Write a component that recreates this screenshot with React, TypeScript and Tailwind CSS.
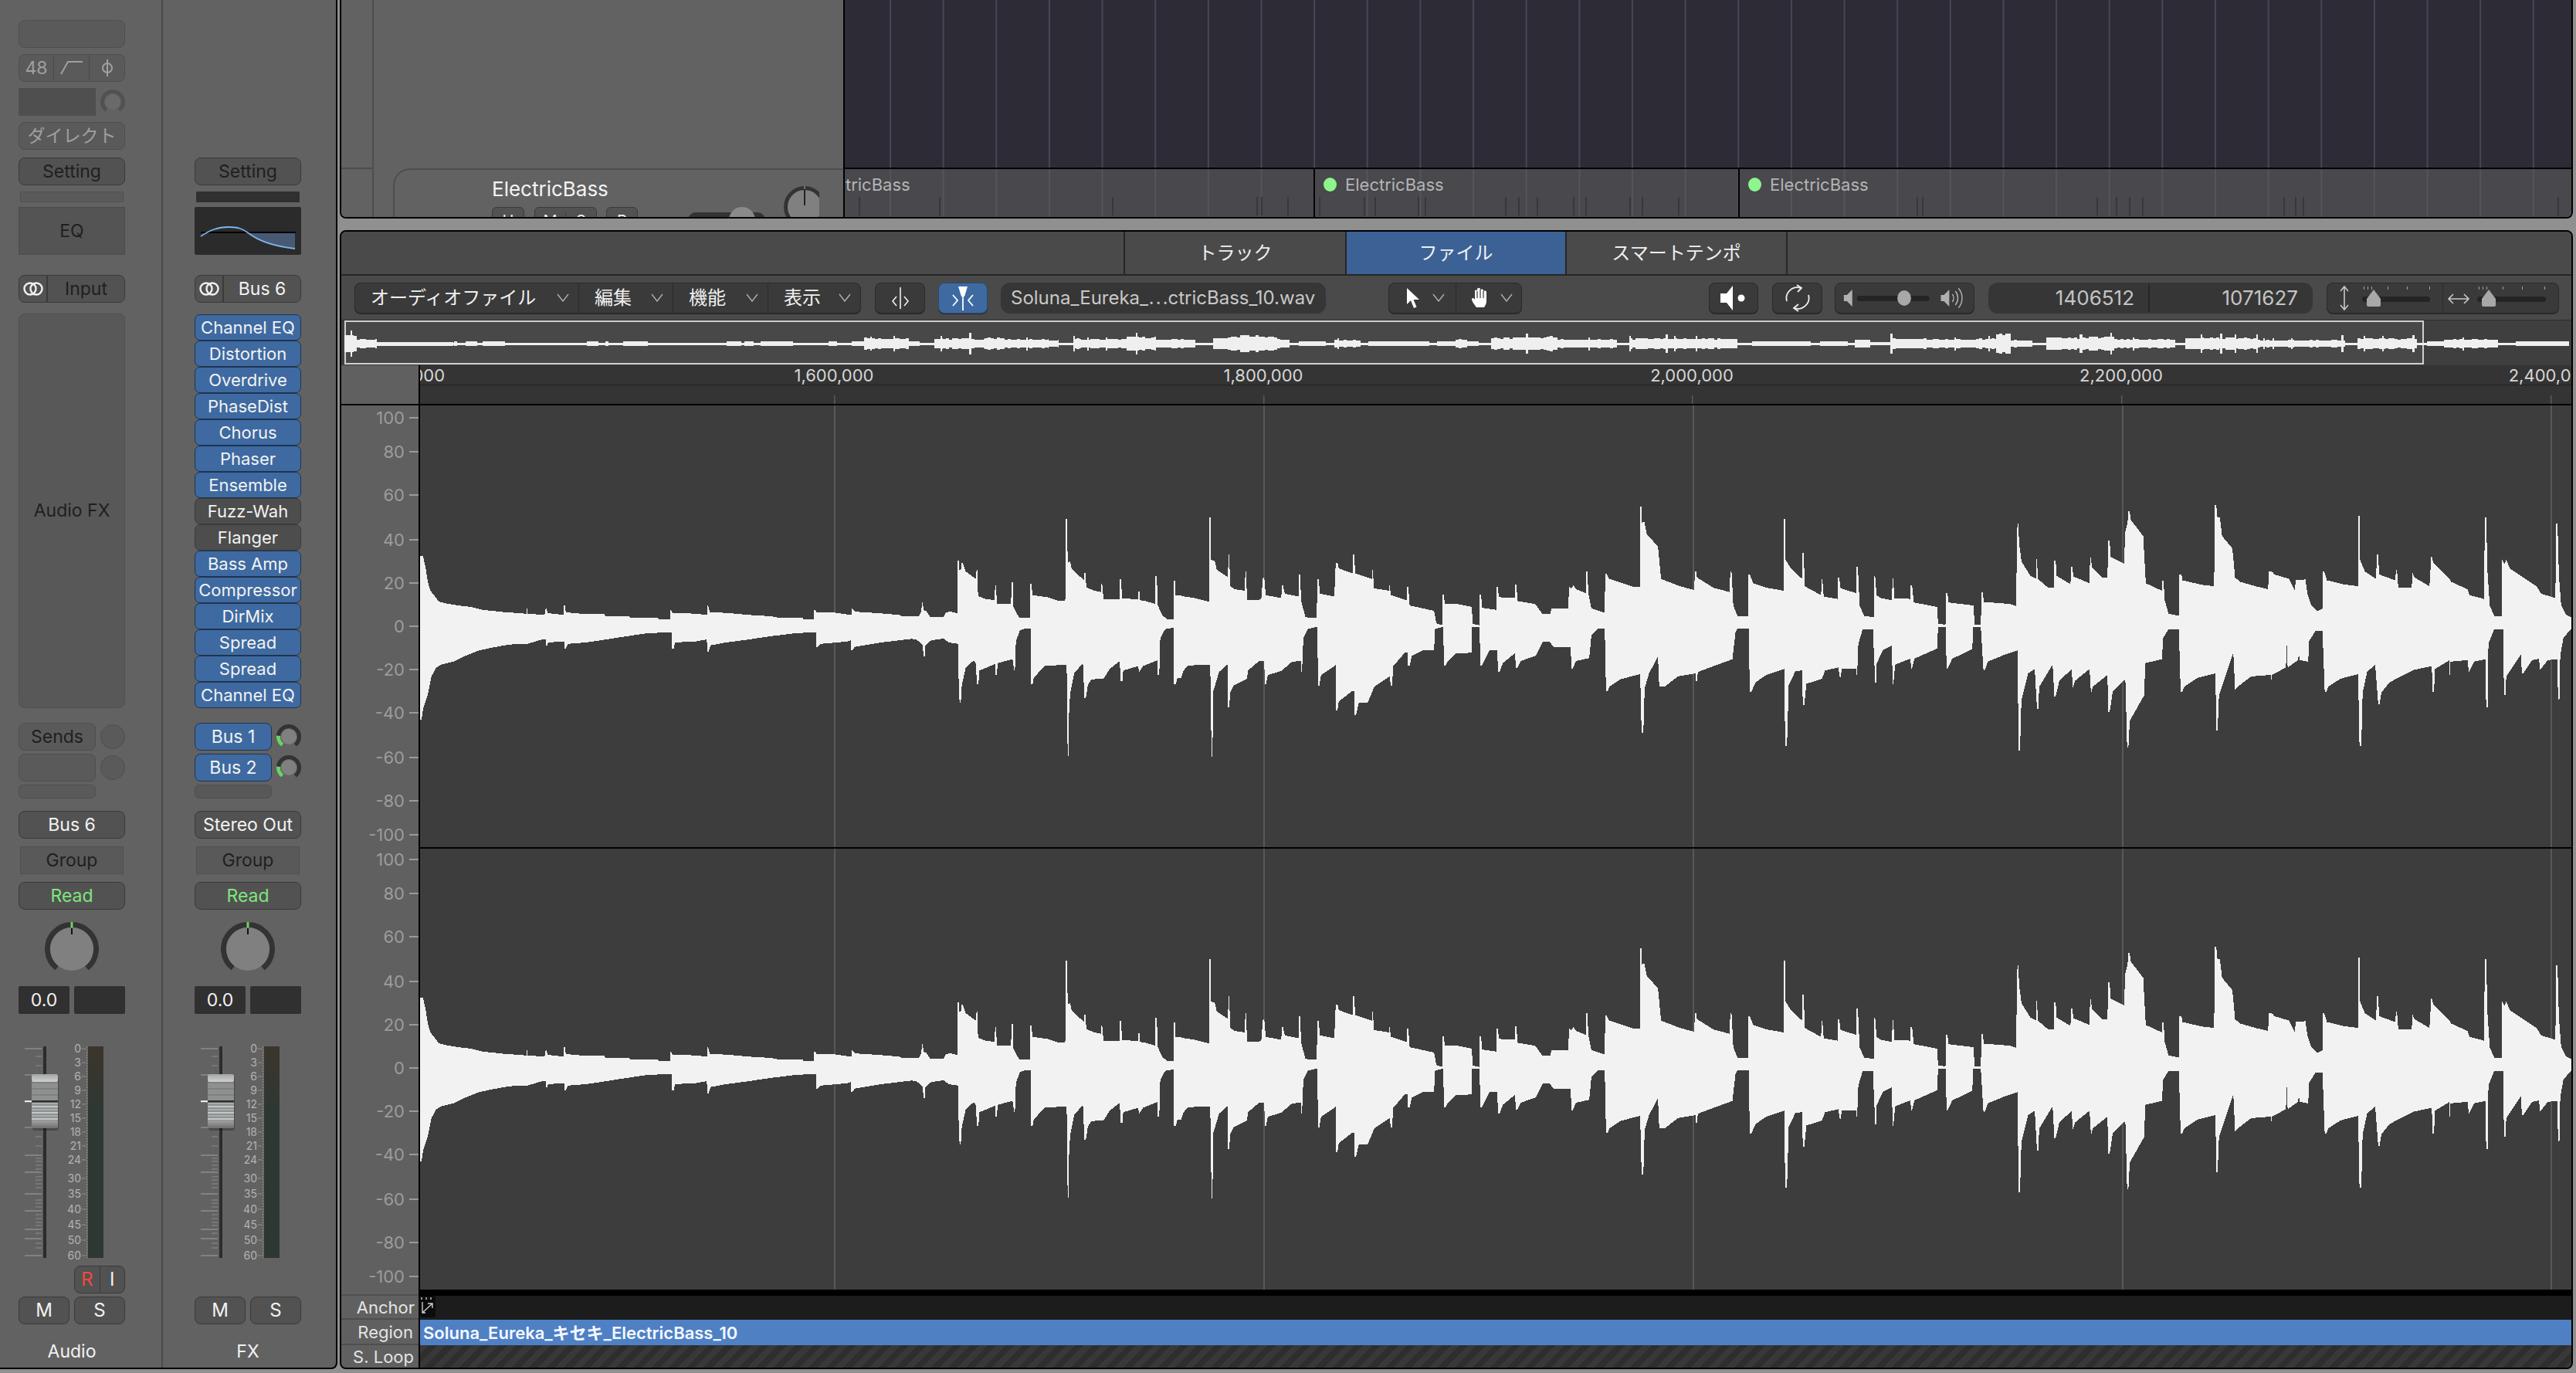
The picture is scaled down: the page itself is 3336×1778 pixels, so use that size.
import React from "react";

const btn = "h-[36px] flex items-center justify-center rounded-[8px] border text-[23px] leading-none";
const dark = "bg-[#525252] border-[#3a3a3a]";
const dim = "bg-[#5a5a5a] border-[#4f4f4f]";
const blue = "bg-[#3e6aa1] border-[#1e3450] text-[#f2f2f2]";
const tool = "h-[40px] flex items-center bg-[#3a3a3a] border border-[#2b2b2b] rounded-[8px] shadow-[0_1px_0_#2a2a2a]";

function pol(cx: number, cy: number, r: number, deg: number): string {
  const a = ((deg - 90) * Math.PI) / 180;
  return `${(cx + r * Math.cos(a)).toFixed(2)} ${(cy + r * Math.sin(a)).toFixed(2)}`;
}
function arc(cx: number, cy: number, r: number, from: number, to: number): string {
  const large = to - from > 180 ? 1 : 0;
  return `M${pol(cx, cy, r, from)}A${r} ${r} 0 ${large} 1 ${pol(cx, cy, r, to)}`;
}

function PanKnob() {
  return (
    <svg width="70" height="70" viewBox="0 0 70 70" className="block">
      <path d={arc(35, 35, 31.5, -142, 142)} fill="none" stroke="#333333" strokeWidth="7" />
      <circle cx="35" cy="35" r="28" fill="#808080" />
      <rect x="33.5" y="0" width="3" height="7" fill="#6cd46c" />
      <rect x="34" y="8" width="2" height="8" fill="#111111" />
    </svg>
  );
}

function SendKnob({ active }: { active: boolean }) {
  return (
    <svg width="32" height="36" viewBox="0 0 32 36" className="block">
      {active ? (
        <>
          <path d={arc(16, 18, 13.5, -142, 142)} fill="none" stroke="#333333" strokeWidth="5" />
          <path d={arc(16, 18, 13.5, -142, -85)} fill="none" stroke="#68d468" strokeWidth="5" />
          <circle cx="16" cy="18" r="10" fill="#808080" />
        </>
      ) : (
        <circle cx="16" cy="18" r="15.5" fill="#5a5a5a" stroke="#4f4f4f" />
      )}
    </svg>
  );
}

function Stereo() {
  return (
    <svg width="26" height="20" viewBox="0 0 26 20" fill="none" stroke="#f0f0f0" strokeWidth="2.4">
      <circle cx="9" cy="10" r="7.5" />
      <circle cx="17" cy="10" r="7.5" />
    </svg>
  );
}

const scaleLabels: [string, number][] = [
  ["0", 1357], ["3", 1375], ["6", 1393], ["9", 1411], ["12", 1429], ["15", 1447], ["18", 1465], ["21", 1483],
  ["24", 1501], ["30", 1525], ["35", 1545], ["40", 1565], ["45", 1585], ["50", 1605], ["60", 1625],
];
const longTicks = [1357, 1391, 1459, 1495, 1517, 1545, 1567, 1591, 1603, 1625];
const shortTicks = [1367, 1379, 1471, 1483, 1499, 1503, 1508, 1513, 1523, 1527, 1532, 1537, 1553, 1557, 1562, 1572, 1577, 1582, 1586, 1596, 1609, 1615];

function Fader() {
  return (
    <svg width="138" height="280" viewBox="24 1354 138 280" className="block overflow-visible">
      <defs>
        <linearGradient id="mtr" x1="0" y1="0" x2="0" y2="1">
          <stop offset="0" stopColor="#3b352c" />
          <stop offset="0.3" stopColor="#2f3733" />
          <stop offset="1" stopColor="#2f3733" />
        </linearGradient>
        <linearGradient id="capTop" x1="0" y1="0" x2="0" y2="1">
          <stop offset="0" stopColor="#a4a6a6" />
          <stop offset="1" stopColor="#cfd1d1" />
        </linearGradient>
        <linearGradient id="capBot" x1="0" y1="0" x2="0" y2="1">
          <stop offset="0" stopColor="#a0a2a2" />
          <stop offset="1" stopColor="#6e6e6e" />
        </linearGradient>
      </defs>
      {longTicks.map((y) => <rect key={y} x="32" y={y - 0.75} width="22" height="1.5" fill="#8d8d8d" />)}
      {shortTicks.map((y) => <rect key={y} x="46" y={y - 0.75} width="8" height="1.5" fill="#7f7f7f" />)}
      <rect x="56" y="1354" width="4" height="274" fill="#2c2c2c" />
      <rect x="42" y="1393" width="34" height="70" rx="3" fill="#000000" opacity="0.25" />
      <rect x="41" y="1390" width="34" height="70" rx="3" fill="#8f9090" />
      <rect x="41" y="1390" width="34" height="10" rx="3" fill="url(#capTop)" />
      {[0, 1, 2, 3, 4, 5].map((i) => <rect key={i} x="41" y={1400 + i * 4} width="34" height="2" fill={i % 2 ? "#8d8f8f" : "#7f8181"} />)}
      <rect x="41" y="1424" width="34" height="2.5" fill="#2e2e2e" />
      {[0, 1, 2, 3, 4, 5].map((i) => <rect key={i} x="41" y={1427 + i * 4} width="34" height="2" fill={i % 2 ? "#c3c9cb" : "#a9adae"} />)}
      <rect x="41" y="1450" width="34" height="10" rx="2" fill="url(#capBot)" />
      <rect x="32" y="1424.2" width="9" height="2" fill="#f4f4f4" />
      {scaleLabels.map(([t, y]) => (
        <g key={t}>
          <text x="105" y={y + 5} textAnchor="end" fontSize="14" fill="#b2b2b2">{t}</text>
          <rect x="106" y={y - 0.5} width="5" height="1" fill="#8f8f8f" />
        </g>
      ))}
      <line x1="112.5" y1="1354" x2="112.5" y2="1628" stroke="#a0a0a0" strokeWidth="1" strokeDasharray="1.5 2" />
      <rect x="114" y="1354" width="20" height="274" fill="url(#mtr)" />
    </svg>
  );
}

function Strip1() {
  return (
    <div className="w-[211px] h-full pl-[24px] flex flex-col border-r-2 border-[#4a4a4a]">
      <div className="w-[138px] flex flex-col">
        <div className={`${btn} ${dim} mt-[26px]`} />
        <div className={`${btn} ${dim} mt-[8px] text-[#a0a0a0]`}>
          <span className="w-[45px] h-full flex items-center justify-center border-r border-[#4a4a4a]">48</span>
          <span className="w-[46px] h-full flex items-center justify-center border-r border-[#4a4a4a]">
            <svg width="30" height="18" viewBox="0 0 30 18" fill="none" stroke="#a0a0a0" strokeWidth="2"><path d="M1 17L10 1H29" /></svg>
          </span>
          <span className="flex-1 h-full flex items-center justify-center">
            <svg width="16" height="22" viewBox="0 0 16 22" fill="none" stroke="#a0a0a0" strokeWidth="2"><ellipse cx="8" cy="11" rx="6" ry="6" /><path d="M8 0V22" /></svg>
          </span>
        </div>
        <div className="mt-[8px] h-[36px] flex items-center justify-between">
          <div className="w-[100px] h-[36px] bg-[#4f4f4f]" />
          <svg width="32" height="36" viewBox="0 0 32 36">
            <path d={arc(16, 18, 13.5, -142, 142)} fill="none" stroke="#515151" strokeWidth="5" />
            <circle cx="16" cy="18" r="10" fill="#6a6a6a" />
          </svg>
        </div>
        <div className={`${btn} ${dim} mt-[8px] text-[#a0a0a0]`}>ダイレクト</div>
        <div className={`${btn} ${dark} mt-[10px] text-[#1f1f1f]`}>Setting</div>
        <div className="mt-[8px] mx-[2px] h-[14px] bg-[#5a5a5a] border border-[#505050]" />
        <div className="mt-[6px] h-[62px] flex items-center justify-center bg-[#545454] border border-[#4c4c4c] text-[23px] text-[#1f1f1f]">EQ</div>
        <div className={`${btn} ${dark} mt-[26px] text-[#1f1f1f]`}>
          <span className="w-[37px] h-full flex items-center justify-center border-r-2 border-[#3a3a3a]"><Stereo /></span>
          <span className="flex-1 text-center">Input</span>
        </div>
        <div className="mt-[14px] h-[511px] flex items-center justify-center bg-[#585858] border border-[#505050] rounded-[8px] text-[23px] text-[#1f1f1f]">Audio FX</div>
        <div className="mt-[19px] flex items-center justify-between">
          <div className={`${btn} ${dim} w-[100px] text-[#1f1f1f]`}>Sends</div>
          <SendKnob active={false} />
        </div>
        <div className="mt-[4px] flex items-center justify-between">
          <div className={`${btn} ${dim} w-[100px]`} />
          <SendKnob active={false} />
        </div>
        <div className={`mt-[4px] h-[18px] w-[100px] rounded-[6px] border ${dim}`} />
        <div className={`${btn} ${dark} mt-[16px] text-[#f2f2f2]`}>Bus 6</div>
        <div className="mt-[10px] mx-[2px] h-[36px] flex items-center justify-center bg-[#595959] border border-[#505050] text-[23px] text-[#1f1f1f]">Group</div>
        <div className={`${btn} ${dark} mt-[10px] text-[#7de77d]`}>Read</div>
        <div className="mt-[16px] flex justify-center"><PanKnob /></div>
        <div className="mt-[13px] flex justify-between">
          <div className="w-[66px] h-[36px] flex items-center justify-center bg-[#303030] rounded-[2px] text-[23px] text-[#f2f2f2]">0.0</div>
          <div className="w-[66px] h-[36px] bg-[#303030] rounded-[2px]" />
        </div>
        <div className="mt-[42px]"><Fader /></div>
        <div className="mt-[4px] h-[35px] flex justify-end">
          <div className={`${btn} ${dark} w-[66px] h-[35px] text-[24px]`}>
            <span className="flex-1 h-full flex items-center justify-center text-[#f04a3a] border-r border-[#3a3a3a]">R</span>
            <span className="flex-1 h-full flex items-center justify-center text-[#f2f2f2]">I</span>
          </div>
        </div>
        <div className="mt-[5px] flex justify-between">
          <div className={`${btn} ${dark} w-[66px] text-[24px] text-[#f2f2f2]`}>M</div>
          <div className={`${btn} ${dark} w-[66px] text-[24px] text-[#f2f2f2]`}>S</div>
        </div>
        <div className="mt-[22px] text-center text-[23px] leading-[26px] text-[#f2f2f2]">Audio</div>
      </div>
    </div>
  );
}

const fx: [string, boolean][] = [
  ["Channel EQ", true], ["Distortion", true], ["Overdrive", true], ["PhaseDist", true], ["Chorus", true],
  ["Phaser", true], ["Ensemble", true], ["Fuzz-Wah", false], ["Flanger", false], ["Bass Amp", true],
  ["Compressor", true], ["DirMix", true], ["Spread", true], ["Spread", true], ["Channel EQ", true],
];

function Strip2() {
  return (
    <div className="flex-1 h-full pl-[41px] flex flex-col">
      <div className="w-[138px] flex flex-col">
        <div className={`${btn} ${dark} mt-[204px] text-[#1f1f1f]`}>Setting</div>
        <div className="mt-[8px] mx-[2px] h-[14px] bg-[#303030] rounded-[1px]" />
        <svg width="138" height="62" viewBox="0 0 138 62" className="block mt-[6px] rounded-[2px]">
          <rect width="138" height="62" fill="#2b2b2b" />
          <path d="M66 32C84 44 100 52 130 54V33Z" fill="#485a73" />
          <rect x="8" y="32" width="123" height="2" fill="#000000" />
          <path d="M8 38C20 30 30 26 44 26C56 26 62 28 70 34C84 45 104 51 130 54" fill="none" stroke="#7eb2ee" strokeWidth="1.8" />
        </svg>
        <div className={`${btn} ${dark} mt-[26px] text-[#f2f2f2]`}>
          <span className="w-[37px] h-full flex items-center justify-center border-r-2 border-[#3a3a3a]"><Stereo /></span>
          <span className="flex-1 text-center">Bus 6</span>
        </div>
        <div className="mt-[15px] flex flex-col">
          {fx.map(([t, on], i) => (
            <div key={i} className={`h-[34px] flex items-center justify-center rounded-[7px] border text-[22px] leading-none whitespace-nowrap ${on ? blue : "bg-[#4d4d4d] border-[#3a3a3a] text-[#f2f2f2]"}`}>{t}</div>
          ))}
        </div>
        <div className="mt-[19px] flex items-center justify-between">
          <div className={`${btn} ${blue} w-[100px]`}>Bus 1</div>
          <SendKnob active />
        </div>
        <div className="mt-[4px] flex items-center justify-between">
          <div className={`${btn} ${blue} w-[100px]`}>Bus 2</div>
          <SendKnob active />
        </div>
        <div className={`mt-[4px] h-[18px] w-[100px] rounded-[6px] border bg-[#585858] border-[#4f4f4f]`} />
        <div className={`${btn} ${dark} mt-[16px] text-[#f2f2f2]`}>Stereo Out</div>
        <div className="mt-[10px] mx-[2px] h-[36px] flex items-center justify-center bg-[#595959] border border-[#505050] text-[23px] text-[#1f1f1f]">Group</div>
        <div className={`${btn} ${dark} mt-[10px] text-[#7de77d]`}>Read</div>
        <div className="mt-[16px] flex justify-center"><PanKnob /></div>
        <div className="mt-[13px] flex justify-between">
          <div className="w-[66px] h-[36px] flex items-center justify-center bg-[#303030] rounded-[2px] text-[23px] text-[#f2f2f2]">0.0</div>
          <div className="w-[66px] h-[36px] bg-[#303030] rounded-[2px]" />
        </div>
        <div className="mt-[42px]"><Fader /></div>
        <div className="mt-[4px] h-[35px]" />
        <div className="mt-[5px] flex justify-between">
          <div className={`${btn} ${dark} w-[66px] text-[24px] text-[#f2f2f2]`}>M</div>
          <div className={`${btn} ${dark} w-[66px] text-[24px] text-[#f2f2f2]`}>S</div>
        </div>
        <div className="mt-[22px] text-center text-[23px] leading-[26px] text-[#f2f2f2]">FX</div>
      </div>
    </div>
  );
}

function Peaks({ x0, w, xs }: { x0: number; w: number; xs: number[] }) {
  return (
    <svg width={w} height="24" viewBox={`${x0} 258 ${w} 24`} className="block" shapeRendering="crispEdges">
      {xs.map((x) => <rect key={x} x={x} y="258" width="2" height="24" fill="#38383a" />)}
    </svg>
  );
}

function Upper() {
  return (
    <div className="h-[283px] ml-[3px] mr-[4px] flex border-l-2 border-b-2 border-r-2 border-black rounded-bl-[8px] rounded-br-[8px] overflow-hidden">
      <div className="w-[650px] h-full flex bg-[#626262]">
        <div className="w-[42px] h-full border-r-2 border-[#4d4d4d]">
          <div className="h-[219px] border-b-2 border-[#4d4d4d]" />
        </div>
        <div className="flex-1 pl-[25px] pt-[218px] overflow-hidden">
          <div className="h-[120px] pl-[126px] pt-[10px] border-t-2 border-l-2 border-[#4d4d4d] rounded-tl-[22px] flex">
            <div className="w-[254px] flex flex-col">
              <div className="text-[26px] leading-[30px] text-[#f4f4f4]">ElectricBass</div>
              <div className="mt-[8px] flex text-[20px] text-[#f2f2f2] leading-none">
                <div className="w-[42px] h-[36px] border border-[#3a3a3a] bg-[#525252] rounded-[6px] flex items-center justify-center">U</div>
                <div className="ml-[13px] w-[81px] h-[36px] border border-[#3a3a3a] bg-[#525252] rounded-[6px] flex items-center">
                  <span className="flex-1 text-center border-r border-[#3a3a3a]">M</span>
                  <span className="flex-1 text-center">S</span>
                </div>
                <div className="ml-[12px] w-[41px] h-[36px] border border-[#3a3a3a] bg-[#525252] rounded-[6px] flex items-center justify-center">R</div>
              </div>
            </div>
            <svg width="170" height="64" viewBox="890 219 170 64" className="block -mt-[10px]">
              <rect x="890" y="274" width="100" height="20" rx="10" fill="#333333" />
              <circle cx="960" cy="284" r="17" fill="#8a8a8a" />
              <circle cx="1041" cy="267" r="24.5" fill="#808080" stroke="#333333" strokeWidth="5" />
              <rect x="1040.5" y="240" width="1" height="4" fill="#6cd46c" />
              <rect x="1040" y="244" width="2" height="21" fill="#222222" />
            </svg>
          </div>
        </div>
      </div>
      <div className="flex-1 h-full flex flex-col border-l-2 border-black min-w-0">
        <div className="h-[219px] bg-[#2d2b36] bg-[linear-gradient(90deg,#474652_0_2px,transparent_2px)] bg-size-[68.65px_100%] bg-position-[58px_0] border-b-2 border-black" />
        <div className="flex-1 flex bg-[#48484d] bg-[linear-gradient(90deg,#54545a_0_2px,transparent_2px)] bg-size-[68.65px_100%] bg-position-[58px_0]">
          <div className="w-[607px] flex flex-col overflow-hidden">
            <div className="h-[36px] pt-[4px] -ml-[43px] flex items-center text-[22px] leading-none text-[#b4b4b4] whitespace-nowrap">ElectricBass</div>
            <Peaks x0={1094} w={607} xs={[1112, 1216, 1440, 1627, 1633, 1667]} />
          </div>
          <div className="w-[550px] flex flex-col border-l-2 border-black overflow-hidden">
            <div className="h-[36px] pt-[4px] pl-[11px] flex items-center text-[22px] leading-none text-[#b4b4b4] whitespace-nowrap">
              <span className="w-[17px] h-[18px] rounded-[50%] bg-[#8cf58c] mr-[11px]" />ElectricBass
            </div>
            <Peaks x0={1703} w={548} xs={[1708, 1766, 1780, 1836, 1845, 1949, 1966, 1990, 2037, 2053, 2110, 2126, 2173]} />
          </div>
          <div className="flex-1 flex flex-col border-l-2 border-black overflow-hidden">
            <div className="h-[36px] pt-[4px] pl-[11px] flex items-center text-[22px] leading-none text-[#b4b4b4] whitespace-nowrap">
              <span className="w-[17px] h-[18px] rounded-[50%] bg-[#8cf58c] mr-[11px]" />ElectricBass
            </div>
            <Peaks x0={2253} w={1077} xs={[2489, 2482, 2715, 2740, 2757, 2774, 2957, 2972, 2982, 3312]} />
          </div>
        </div>
      </div>
    </div>
  );
}

function Chev() {
  return (
    <svg width="16" height="11" viewBox="0 0 16 11" fill="none" stroke="#b0b0b0" strokeWidth="1.4" className="shrink-0"><path d="M1 1L8 10L15 1" /></svg>
  );
}

function MenuSeg({ t, w, last }: { t: string; w: string; last?: boolean }) {
  return (
    <div className={`${w} h-full flex items-center justify-between pl-[20px] pr-[12px] text-[24px] leading-none text-[#f0f0f0] ${last ? "" : "border-r border-[#2b2b2b]"}`}>
      <span className="whitespace-nowrap">{t}</span>
      <Chev />
    </div>
  );
}

function Toolbar() {
  return (
    <div className="h-[58px] flex items-center pl-[17px] bg-[#4a4a4a] border-b border-[#2e2e2e]">
      <div className={`${tool} w-[656px]`}>
        <MenuSeg t="オーディオファイル" w="w-[290px]" />
        <MenuSeg t="編集" w="w-[122px]" />
        <MenuSeg t="機能" w="w-[123px]" />
        <MenuSeg t="表示" w="flex-1" last />
      </div>
      <div className={`${tool} w-[65px] ml-[18px] justify-center`}>
        <svg width="28" height="30" viewBox="0 0 28 30" fill="none" stroke="#f0f0f0" strokeWidth="1.6">
          <path d="M14 1V29M9 13L4 19L9 25M19 13L24 19L19 25" />
        </svg>
      </div>
      <div className={`${tool} w-[64px] ml-[17px] justify-center bg-[#3e6aa1] border-[#2c4a70]`}>
        <svg width="36" height="32" viewBox="0 0 36 32" fill="none" stroke="#ffffff" strokeWidth="1.8">
          <path d="M18 14V32M5 12L11 19L5 26M31 12L25 19L31 26" />
          <path d="M12 1H24L20 14H16Z" fill="#ffffff" stroke="none" />
        </svg>
      </div>
      <div className="w-[421px] ml-[17px] h-[40px] flex items-center pl-[13px] bg-[#363636] rounded-[12px] text-[24px] leading-none text-[#c8c8c8] whitespace-nowrap overflow-hidden">Soluna_Eureka_⋯ctricBass_10.wav</div>
      <div className={`${tool} w-[173px] ml-[81px]`}>
        <div className="w-[87px] h-full flex items-center pl-[22px] gap-[16px] border-r border-[#2b2b2b]">
          <svg width="18" height="26" viewBox="0 0 18 26" fill="#ffffff"><path d="M1 0V21L6 16L10 26L13.5 24.5L9.5 15H17Z" /></svg>
          <Chev />
        </div>
        <div className="flex-1 h-full flex items-center pl-[19px] gap-[14px]">
          <svg width="24" height="27" viewBox="0 0 24 27"><path d="M7 26C4 22 1 18 1 15C2 13 4 14 5 16V5C5 3 8 3 8 5V3C8 0 12 0 12 3V4C12 2 16 2 16 4V6C16 4 20 4 20 6V18C20 22 18 24 17 26Z" fill="#ffffff" /><path d="M8 5V14M12 3V14M16 5V14" stroke="#3a3a3a" strokeWidth="1.2" /></svg>
          <Chev />
        </div>
      </div>
      <div className={`${tool} w-[64px] ml-[242px] justify-center`}>
        <svg width="36" height="34" viewBox="0 0 36 34" fill="#ffffff"><path d="M1 11H9L17 1V33L9 23H1Z" /><circle cx="28" cy="17" r="4.5" /></svg>
      </div>
      <div className={`${tool} w-[65px] ml-[18px] justify-center`}>
        <svg width="34" height="36" viewBox="0 0 34 36" fill="none" stroke="#f0f0f0" strokeWidth="1.8">
          <path d="M3 22A14 14 0 0 1 21 5M31 14A14 14 0 0 1 13 31" />
          <path d="M16 1L22 5L17 10M18 26L12 31L18 35" />
        </svg>
      </div>
      <div className={`${tool} w-[181px] ml-[16px]`}>
        <svg width="181" height="38" viewBox="0 0 181 38" className="block">
          <path d="M11 15H15L22 8V30L15 23H11Z" fill="#b0b0b0" />
          <rect x="28" y="16" width="95" height="7" rx="3.5" fill="#242424" />
          <ellipse cx="90" cy="19" rx="9" ry="10" fill="#a8a8a8" />
          <path d="M138 15H142L149 8V30L142 23H138Z" fill="#b0b0b0" />
          <path d="M153 14A8 8 0 0 1 153 24M157 10A14 14 0 0 1 157 28M161 6A20 20 0 0 1 161 32" fill="none" stroke="#b0b0b0" strokeWidth="1.5" />
        </svg>
      </div>
      <div className="w-[420px] ml-[18px] h-[40px] flex items-center bg-[#363636] rounded-[12px] text-[26px] leading-none text-[#c4c4c4] text-right">
        <div className="w-[209px] pr-[18px] h-[36px] flex items-center justify-end border-r-2 border-[#262626]">1406512</div>
        <div className="flex-1 pr-[19px]">1071627</div>
      </div>
      <div className={`${tool} w-[301px] ml-[18px]`}>
        <div className="w-[150px] h-full border-r border-[#2b2b2b]">
          <svg width="150" height="38" viewBox="3013 368 150 38" className="block">
            <path d="M3035 372V402M3030 378L3035 372L3040 378M3030 396L3035 402L3040 396" fill="none" stroke="#c8c8c8" strokeWidth="1.6" />
            {[3060, 3065, 3070, 3091, 3116, 3145].map((x) => <rect key={x} x={x} y="372" width="1" height="4" fill="#a0a0a0" />)}
            <rect x="3058" y="385" width="88" height="7" rx="3.5" fill="#242424" />
            <path d="M3073 376L3082 388V396C3082 398 3080 398 3079 398H3067C3066 398 3064 398 3064 396V388Z" fill="#a8a8a8" />
          </svg>
        </div>
        <div className="flex-1 h-full">
          <svg width="150" height="38" viewBox="3164 368 150 38" className="block">
            <path d="M3171 388H3197M3177 382L3171 388L3177 394M3191 382L3197 388L3191 394" fill="none" stroke="#c8c8c8" strokeWidth="1.6" />
            {[3210, 3215, 3220, 3241, 3266, 3295].map((x) => <rect key={x} x={x} y="372" width="1" height="4" fill="#a0a0a0" />)}
            <rect x="3208" y="385" width="89" height="7" rx="3.5" fill="#242424" />
            <path d="M3223 376L3232 388V396C3232 398 3230 398 3229 398H3217C3216 398 3214 398 3214 396V388Z" fill="#a8a8a8" />
          </svg>
        </div>
      </div>
    </div>
  );
}

const ov: [number, number, number][] = [
  [446, 462, 10], [462, 488, 5], [488, 587, 2.5], [588, 592, 3], [603, 618, 3], [625, 654, 3], [760, 775, 3], [784, 788, 3],
  [807, 839, 3], [941, 960, 3], [964, 976, 3], [985, 1027, 3], [1073, 1084, 3], [1103, 1119, 3], [1119, 1129, 8],
  [1129, 1177, 6], [1177, 1191, 3], [1210, 1221, 6], [1221, 1256, 6], [1255, 1258, 14], [1258, 1275, 5], [1275, 1301, 7],
  [1301, 1358, 5], [1358, 1371, 4], [1390, 1400, 6], [1400, 1459, 5], [1459, 1497, 8], [1497, 1548, 5], [1571, 1590, 6],
  [1590, 1654, 9], [1654, 1670, 5], [1682, 1717, 3], [1728, 1762, 4], [1772, 1816, 3], [1816, 1851, 3], [1861, 1885, 3],
  [1885, 1900, 5], [1900, 1915, 3], [1931, 1976, 7], [1976, 1979, 13], [1979, 2017, 8], [2017, 2094, 5], [2110, 2157, 6],
  [2157, 2160, 12], [2160, 2250, 6], [2269, 2345, 3], [2357, 2393, 3], [2402, 2422, 5], [2422, 2448, 2], [2448, 2451, 13],
  [2451, 2495, 6], [2495, 2559, 5], [2559, 2585, 6], [2585, 2604, 12], [2604, 2632, 4], [2650, 2693, 7], [2693, 2697, 12],
  [2697, 2738, 8], [2738, 2817, 5], [2830, 2875, 7], [2875, 2878, 13], [2878, 2923, 7], [2923, 3037, 4], [3032, 3035, 11],
  [3053, 3130, 6], [3124, 3127, 11], [3143, 3165, 3], [3165, 3235, 5], [3258, 3327, 3],
];

function rnd(i: number): number {
  const v = Math.sin(i * 12.9898) * 43758.5453;
  return v - Math.floor(v);
}

const ovCols: [number, number, number][] = [];
ov.forEach(([a, b, h]) => {
  if (b - a < 8) {
    ovCols.push([a, b - a, h]);
    return;
  }
  for (let x = a; x < b; x += 4) {
    const r = rnd(x);
    ovCols.push([x, Math.min(4, b - x), h > 3 ? h * (0.9 + 0.3 * r) : h]);
    if (h > 3 && rnd(x + 7) > 0.93) ovCols.push([x, 2, h * 1.7]);
  }
});

function Overview() {
  return (
    <svg width="2888" height="58" viewBox="442 415 2888 58" className="block" shapeRendering="crispEdges">
      <rect x="442" y="415" width="2888" height="58" fill="#3f3f3f" />
      <rect x="447" y="416" width="2691" height="55" fill="#484848" stroke="#cfcfcf" strokeWidth="2" />
      <rect x="447" y="443.5" width="2880" height="3" fill="#efefef" />
      {ovCols.map(([x, w, h], i) => <rect key={i} x={x} y={445 - h} width={w} height={h * 2} fill="#efefef" />)}
    </svg>
  );
}

const rulerX = [524, 1080, 1636, 2191, 2747, 3303];
const rulerT = ["1,400,000", "1,600,000", "1,800,000", "2,000,000", "2,200,000", "2,400,000"];

function Ruler() {
  return (
    <div className="h-[52px] flex">
      <div className="w-[100px] h-full bg-[#606060] border-b-2 border-black" />
      <div className="w-[2px] h-full bg-black" />
      <svg width="2786" height="52" viewBox="544 473 2786 52" className="block">
        <rect x="544" y="473" width="2786" height="50" fill="#343434" />
        <rect x="544" y="497.5" width="2786" height="2" fill="#282828" />
        <rect x="544" y="523" width="2786" height="2" fill="#000000" />
        {rulerX.map((x, i) => (
          <g key={x}>
            <text x={x} y="494" textAnchor="middle" fontSize="22" fill="#d6d6d6">{rulerT[i]}</text>
            <rect x={x} y="512" width="1.5" height="11" fill="#5a5a5a" />
          </g>
        ))}
      </svg>
    </div>
  );
}

const t8 = "22,760 22,523 28,523 33,560 38,612 43,640 50,655 60,677 75,683 100,690 125,695 150,705 190,712 238,718 238,700 240,700 240,718 275,722 277,700 279,700 281,716 314,722 314,690 316,690 318,713 350,718 396,720 398,726 447,727 449,732 505,733 507,737 530,737 530,706 532,706 535,717 570,717 600,721 605,721 605,690 607,690 610,712 650,716 690,722 738,727 740,730 800,733 800,737 822,737 822,706 825,706 827,713 860,713 895,722 898,722 898,701 900,701 905,711 960,717 995,722 1000,726 1035,726 1040,708 1041,680 1043,680 1044,706 1050,708 1058,730 1085,730 1090,713 1100,711 1113,717 1113,538 1116,538 1117,570 1120,570 1122,545 1124,545 1130,575 1150,600 1152,570 1154,570 1155,658 1170,668 1188,672 1190,622 1192,622 1193,684 1222,684 1223,612 1226,612 1227,695 1235,722 1240,732 1260,732 1260,617 1263,617 1266,655 1295,662 1320,675 1332,675 1333,397 1336,397 1337,545 1342,540 1345,565 1370,605 1371,580 1373,580 1375,628 1390,640 1405,645 1405,617 1407,617 1410,670 1442,668 1443,602 1446,602 1447,665 1480,670 1481,643 1483,643 1484,672 1495,675 1515,685 1515,591 1518,591 1520,690 1530,725 1540,737 1552,737 1552,606 1555,606 1556,655 1568,655";
const b8 = "22,1077 25,1077 28,1040 38,990 45,930 55,900 65,890 90,880 115,860 140,843 170,832 205,822 240,820 270,805 277,805 277,825 280,825 282,815 315,812 315,835 318,835 322,820 360,815 400,805 430,797 480,785 530,780 533,780 533,835 537,835 540,815 580,812 604,805 606,846 608,846 612,825 640,816 690,805 730,795 780,785 823,780 826,780 826,830 830,830 835,820 890,812 897,808 897,840 900,840 905,830 960,815 1020,803 1030,805 1043,825 1044,862 1047,862 1048,825 1060,808 1085,802 1095,815 1115,820 1116,990 1118,1018 1120,1018 1122,960 1130,900 1145,878 1150,880 1153,955 1156,955 1158,910 1190,888 1190,925 1193,925 1195,885 1225,872 1228,908 1230,908 1232,810 1240,775 1250,768 1262,768 1262,955 1266,955 1268,935 1290,895 1335,890 1337,1200 1339,1200 1340,1030 1343,980 1350,920 1368,885 1371,1003 1374,1003 1378,960 1385,940 1410,938 1422,905 1443,878 1444,945 1448,945 1450,910 1480,895 1482,915 1490,895 1520,875 1520,925 1523,925 1525,800 1535,770 1552,765 1553,955 1557,955 1560,935 1568,935";
const t9 = "0,658 30,665 62,677 63,392 66,392 67,535 75,540 80,570 105,595 106,518 108,518 110,625 120,635 143,640 144,575 146,575 148,672 180,670 184,596 187,596 190,655 225,665 227,622 229,622 233,650 265,660 265,585 268,585 270,675 280,730 305,732 307,601 310,601 312,650 345,660 348,545 352,545 355,565 387,582 387,518 390,518 392,582 430,600 430,570 432,570 434,632 468,640 468,622 470,622 472,655 508,672 509,628 512,628 515,690 570,708 575,750 588,757 589,653 592,653 594,685 622,685 655,695 657,752 672,757 673,653 676,653 678,698 710,705 711,628 714,628 716,662 752,665 753,618 756,618 758,675 798,685 815,720 832,718 835,700 872,700 875,628 880,632 884,622 890,635 912,648 913,575 916,575 918,650 925,700 955,715 956,580 960,585 965,600 990,612 1020,627 1035,627 1035,355 1038,355 1039,410 1044,405 1050,450 1075,490 1082,600 1090,605 1125,625 1157,638 1158,575 1161,575 1163,595 1200,630 1237,645 1238,575 1241,575 1245,690 1255,727 1278,727 1279,585 1282,585 1290,615 1320,630 1358,640 1359,397 1362,397 1363,535 1375,565 1400,600 1401,512 1404,512 1406,625 1443,655 1444,602 1446,602 1449,660 1480,668 1481,596 1484,596 1487,632 1522,648 1523,560 1526,560 1530,690 1540,725 1562,730 1562,591 1565,591 1568,650";
const b9 = "0,930 5,910 15,893 65,890 66,1000 68,1202 70,1202 72,980 85,915 102,890 105,890 105,1035 108,1035 110,985 118,960 148,938 150,910 175,878 187,878 188,955 191,955 195,925 225,912 250,880 270,878 270,915 272,915 275,800 285,770 307,762 308,962 311,962 315,925 345,895 348,890 349,1045 352,1045 355,1015 385,980 390,980 391,1060 394,1060 400,1020 420,1020 435,965 470,930 472,962 475,962 478,895 505,848 510,848 510,893 515,893 520,860 545,842 570,840 572,770 590,762 593,893 596,893 600,880 620,852 655,850 655,762 672,762 675,893 678,893 695,842 712,842 715,915 718,915 725,885 752,852 755,902 758,902 765,878 800,860 815,812 830,812 840,832 878,832 880,903 883,903 890,878 920,868 925,790 940,768 955,768 958,980 962,980 965,965 990,940 1035,922 1038,1122 1042,1122 1045,970 1055,920 1075,862 1078,965 1090,965 1120,930 1160,920 1161,945 1163,945 1165,915 1210,890 1243,872 1250,780 1255,768 1280,768 1282,982 1286,982 1295,950 1320,925 1360,905 1362,1165 1366,1165 1370,960 1385,912 1400,910 1402,1028 1405,1028 1410,955 1445,938 1452,910 1482,900 1486,940 1490,905 1522,905 1524,935 1527,820 1537,770 1560,770 1565,950 1568,950";
const t10 = "0,655 10,665 35,672 36,597 38,597 40,665 76,668 77,622 80,622 84,680 137,695 138,752 155,755 156,648 159,648 162,680 218,690 220,755 234,755 236,644 238,644 241,678 300,685 313,692 316,413 318,413 320,480 325,540 345,590 358,600 358,533 360,533 362,600 385,630 398,630 399,538 402,538 404,590 435,618 437,560 439,560 442,592 478,615 479,528 481,528 483,560 505,595 518,595 520,470 523,470 525,525 555,548 558,440 563,412 565,371 568,371 570,400 598,455 604,615 640,640 641,606 644,606 646,670 655,718 678,725 679,585 684,585 686,605 730,620 757,625 759,350 762,350 764,390 770,392 775,455 798,497 804,595 815,610 850,625 878,635 880,575 884,575 888,577 892,585 925,600 938,640 940,605 962,602 966,650 975,690 988,710 1000,700 1001,575 1004,575 1010,605 1045,618 1080,625 1081,387 1083,387 1084,535 1095,575 1120,600 1122,518 1125,518 1127,585 1163,605 1165,570 1167,570 1170,630 1200,630 1202,580 1206,595 1240,625 1244,518 1248,545 1285,600 1288,610 1325,635 1330,655 1362,668 1364,392 1367,392 1370,580 1375,690 1385,725 1402,725 1403,535 1408,550 1412,535 1420,565 1445,590 1480,625 1490,650 1522,665 1524,413 1527,413 1530,590 1535,690 1545,720 1558,730 1558,760";
const b10 = "0,888 15,840 35,826 36,955 38,955 42,890 76,870 78,903 80,903 85,870 137,835 138,762 156,762 157,903 160,903 170,870 215,838 217,762 234,762 240,908 243,908 250,880 290,855 316,842 319,1180 322,1180 325,1010 340,920 355,905 360,1040 363,1040 365,965 395,890 399,997 402,997 410,945 438,905 440,970 445,945 478,905 481,988 485,965 518,925 520,1050 523,1050 530,980 558,940 562,1170 565,1170 568,1080 600,995 603,885 640,872 643,800 655,770 678,770 682,982 686,982 690,965 720,935 760,920 762,1112 765,1112 768,995 800,848 804,975 810,965 840,930 885,925 885,945 887,925 918,900 920,825 922,900 945,875 947,855 949,875 968,880 970,810 985,775 1000,775 1005,982 1009,982 1013,965 1040,938 1080,922 1083,1165 1087,1165 1090,985 1100,915 1118,890 1125,1023 1128,1023 1132,985 1150,950 1205,908 1245,895 1247,982 1250,982 1252,905 1285,875 1285,935 1287,880 1325,875 1328,915 1340,880 1365,872 1367,1035 1370,1035 1372,820 1385,770 1405,770 1407,992 1410,992 1412,930 1445,855 1447,920 1450,920 1470,875 1485,870 1488,908 1505,875 1527,872 1528,1008 1531,1008 1533,860 1540,800 1558,768";

function seg(top: string, bot: string, x0: number, sx: number): string {
  const conv = (s: string) =>
    s.split(" ").map((p) => {
      const [x, y] = p.split(",").map(Number);
      return `${(x0 + x / sx).toFixed(1)},${(520 + y / 2.613).toFixed(1)}`;
    });
  return [...conv(top), ...conv(bot).reverse()].join(" ");
}
const polys = [seg(t8, b8, 530, 1.568), seg(t9, b9, 1530, 1.742), seg(t10, b10, 2430, 1.731)];
const vLines = [1080, 1636, 2192, 2748, 3303];
const axisT = ["100", "80", "60", "40", "20", "0", "-20", "-40", "-60", "-80", "-100"];
const axisD = [-270, -226, -170, -112, -56, 0, 56, 112, 170, 226, 270];

function Axis() {
  return (
    <svg width="100" height="1153" viewBox="442 525 100 1153" className="block">
      <rect x="442" y="525" width="100" height="1153" fill="#606060" />
      {[811, 1383].map((c) =>
        axisT.map((t, i) => (
          <g key={`${c}${t}`}>
            <text x="524" y={c + axisD[i] + 8} textAnchor="end" fontSize="22" fill="#9c9c9c">{t}</text>
            <rect x="530" y={c + axisD[i] - 1} width="12" height="2" fill="#9a9a9a" />
          </g>
        ))
      )}
      <rect x="442" y="1676" width="100" height="2" fill="#505050" />
    </svg>
  );
}

function Wave() {
  return (
    <svg width="2786" height="1153" viewBox="544 525 2786 1153" className="block" shapeRendering="crispEdges">
      <rect x="544" y="525" width="2786" height="1153" fill="#3d3d3d" />
      {vLines.map((x) => <rect key={x} x={x} y="525" width="2" height="1145" fill="#585858" />)}
      {polys.map((p, i) => <polygon key={i} points={p} fill="#f2f2f2" />)}
      <g transform="translate(0 572)">
        {polys.map((p, i) => <polygon key={i} points={p} fill="#f2f2f2" />)}
      </g>
      <rect x="544" y="1097" width="2786" height="2" fill="#000000" />
      <rect x="544" y="1670" width="2786" height="8" fill="#000000" />
    </svg>
  );
}

function Rows() {
  return (
    <div className="flex flex-col">
      <div className="h-[31px] flex">
        <div className="w-[100px] flex items-center justify-end pr-[5px] bg-[#606060] border-b-2 border-[#4e4e4e] text-[22px] leading-none text-[#e4e4e4]">Anchor</div>
        <div className="w-[2px] bg-black" />
        <div className="flex-1 bg-[#1c1c1c]">
          <svg width="20" height="31" viewBox="0 0 20 31" className="block">
            <rect width="20" height="28" rx="3" fill="#0c0c0c" />
            <path d="M2 2V5M8 2V5M14 2V5M3 8V22H7M3 22L16 10M10 10H16V16" fill="none" stroke="#cfcfcf" strokeWidth="1.4" />
          </svg>
        </div>
      </div>
      <div className="h-[33px] flex">
        <div className="w-[100px] flex items-center justify-end pr-[7px] bg-[#606060] border-b-2 border-[#4e4e4e] text-[22px] leading-none text-[#e4e4e4]">Region</div>
        <div className="w-[2px] bg-black" />
        <div className="flex-1 flex items-center pl-[4px] bg-[#4f80c4] text-[22px] font-semibold leading-none text-[#f4f8ff] whitespace-nowrap">Soluna_Eureka_キセキ_ElectricBass_10</div>
      </div>
      <div className="h-[29px] flex">
        <div className="w-[100px] flex items-center justify-end pr-[6px] bg-[#606060] text-[22px] leading-none text-[#e4e4e4]">S. Loop</div>
        <div className="w-[2px] bg-black" />
        <div className="flex-1 bg-[repeating-linear-gradient(135deg,#383838_0_8px,#2e2e2e_8px_16px)]" />
      </div>
    </div>
  );
}

function Lower() {
  return (
    <div className="h-[1475px] ml-[3px] mr-[4px] mt-[15px] border-2 border-black rounded-[8px] overflow-hidden flex flex-col bg-[#4a4a4a]">
      <div className="h-[57px] flex bg-[#4a4a4a] border-b-2 border-[#262626] text-[24px] leading-none text-[#f0f0f0]">
        <div className="w-[1015px] border-r-2 border-[#262626]" />
        <div className="w-[287px] flex items-center justify-center border-r-2 border-[#262626]">トラック</div>
        <div className="w-[285px] flex items-center justify-center border-r-2 border-[#262626] bg-[#3c6295]">ファイル</div>
        <div className="w-[286px] flex items-center justify-center border-r-2 border-[#262626]">スマートテンポ</div>
      </div>
      <Toolbar />
      <Overview />
      <Ruler />
      <div className="h-[1153px] flex">
        <Axis />
        <div className="w-[2px] bg-black" />
        <Wave />
      </div>
      <Rows />
    </div>
  );
}

export default function App() {
  return (
    <div className="w-[3336px] h-[1778px] flex overflow-hidden bg-[#909090] font-['Inter','Noto_Sans_CJK_JP',sans-serif] antialiased">
      <div className="w-[437px] h-[1773px] flex bg-[#626262] border-r-2 border-b-2 border-black rounded-br-[8px] shrink-0 overflow-hidden">
        <Strip1 />
        <Strip2 />
      </div>
      <div className="flex-1 min-w-0 flex flex-col">
        <Upper />
        <Lower />
      </div>
    </div>
  );
}
